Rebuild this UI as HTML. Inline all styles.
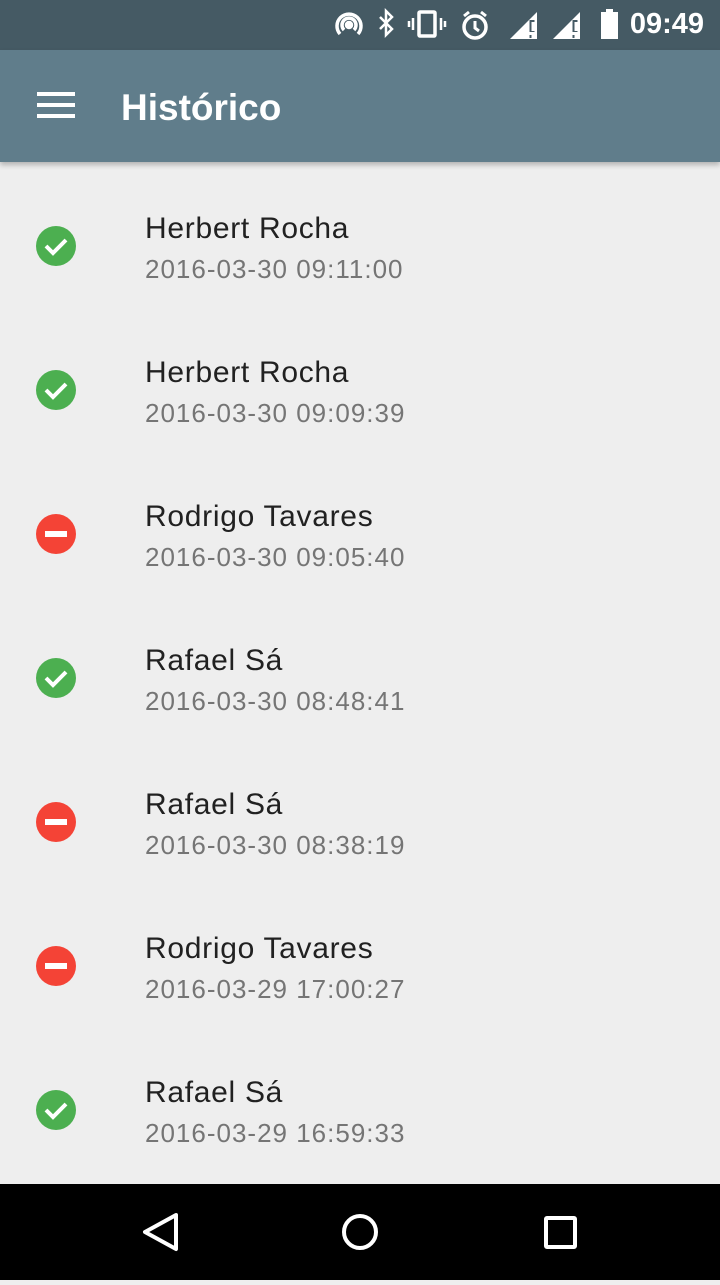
<!DOCTYPE html>
<html><head><meta charset="utf-8"><style>
*{margin:0;padding:0;box-sizing:border-box}
body{width:720px;height:1280px;background:#eeeeee;font-family:"Liberation Sans",Roboto,sans-serif;position:relative;overflow:hidden}
.sb{position:absolute;top:0;left:0;width:720px;height:50px;background:#455a64;color:#fff}
.sb .t{position:absolute;right:16px;top:8px;font-size:29px;font-weight:bold}
.ab{position:absolute;top:50px;left:0;width:720px;height:112px;background:#607d8b;box-shadow:0 3px 5px rgba(0,0,0,.25)}
.ab .title{position:absolute;left:121px;top:37px;color:#fff;font-size:37px;font-weight:bold}
.row{position:absolute;left:0;width:720px;height:144px}
.row svg{position:absolute;left:36px;top:52px}
.name{position:absolute;left:145px;top:38px;font-size:30px;letter-spacing:0.7px;color:#212121}
.date{position:absolute;left:145px;top:80px;font-size:26px;letter-spacing:1px;color:#757575}
.nav{position:absolute;top:1184px;left:0;width:720px;height:96px;background:#000}
</style></head><body>
<div class="sb">
<svg width="300" height="50" style="position:absolute;left:320px;top:0" fill="none" stroke="#fff" stroke-width="3.5">
<path d="M20 34a12 12 0 1 1 18 0M24 30a7 7 0 1 1 10 0"/><circle cx="29" cy="25" r="2.5" fill="#fff"/>
<path d="M60 17l12 12-6 6V11l6 6-12 12" stroke-width="2.5"/>
<rect x="99" y="12" width="16" height="24" rx="1"/><path d="M93 18v12M121 18v12M89 21v6M125 21v6" stroke-width="2.5"/>
<circle cx="155" cy="27" r="11"/><path d="M155 21v7l4 3M144 16l5-4M166 16l-5-4" stroke-width="3"/>
<path d="M190 39L217 12v27z" fill="#fff" stroke="none"/><path d="M212 20v12M212 35v3" stroke="#455a64" stroke-width="5"/><path d="M213 22v9M213 35v3" stroke-width="3"/>
<path d="M233 39L260 12v27z" fill="#fff" stroke="none"/><path d="M255 20v12M255 35v3" stroke="#455a64" stroke-width="5"/><path d="M256 22v9M256 35v3" stroke-width="3"/>
<rect x="281" y="12" width="17" height="27" fill="#fff" stroke="none"/><rect x="286" y="9" width="7" height="4" fill="#fff" stroke="none"/>
</svg>
<div class="t">09:49</div>
</div>
<div class="ab">
<svg width="40" height="30" style="position:absolute;left:37px;top:41px"><rect y="1" width="38" height="4" fill="#fff"/><rect y="12" width="38" height="4" fill="#fff"/><rect y="23" width="38" height="4" fill="#fff"/></svg>
<div class="title">Histórico</div>
</div>

<div class="row" style="top:174px"><svg width="40" height="40"><circle cx="20" cy="20" r="20" fill="#4caf50"/><path d="M10 20l7 7 13-13" stroke="#fff" stroke-width="4" fill="none"/></svg><div class="name">Herbert Rocha</div><div class="date">2016-03-30 09:11:00</div></div>
<div class="row" style="top:318px"><svg width="40" height="40"><circle cx="20" cy="20" r="20" fill="#4caf50"/><path d="M10 20l7 7 13-13" stroke="#fff" stroke-width="4" fill="none"/></svg><div class="name">Herbert Rocha</div><div class="date">2016-03-30 09:09:39</div></div>
<div class="row" style="top:462px"><svg width="40" height="40"><circle cx="20" cy="20" r="20" fill="#f44336"/><rect x="9" y="17" width="22" height="6" fill="#fff"/></svg><div class="name">Rodrigo Tavares</div><div class="date">2016-03-30 09:05:40</div></div>
<div class="row" style="top:606px"><svg width="40" height="40"><circle cx="20" cy="20" r="20" fill="#4caf50"/><path d="M10 20l7 7 13-13" stroke="#fff" stroke-width="4" fill="none"/></svg><div class="name">Rafael Sá</div><div class="date">2016-03-30 08:48:41</div></div>
<div class="row" style="top:750px"><svg width="40" height="40"><circle cx="20" cy="20" r="20" fill="#f44336"/><rect x="9" y="17" width="22" height="6" fill="#fff"/></svg><div class="name">Rafael Sá</div><div class="date">2016-03-30 08:38:19</div></div>
<div class="row" style="top:894px"><svg width="40" height="40"><circle cx="20" cy="20" r="20" fill="#f44336"/><rect x="9" y="17" width="22" height="6" fill="#fff"/></svg><div class="name">Rodrigo Tavares</div><div class="date">2016-03-29 17:00:27</div></div>
<div class="row" style="top:1038px"><svg width="40" height="40"><circle cx="20" cy="20" r="20" fill="#4caf50"/><path d="M10 20l7 7 13-13" stroke="#fff" stroke-width="4" fill="none"/></svg><div class="name">Rafael Sá</div><div class="date">2016-03-29 16:59:33</div></div>

<div class="nav">
<svg width="720" height="96" fill="none" stroke="#fff" stroke-width="4">
<path d="M176 31L145 48l31 17z" stroke-linejoin="round"/>
<circle cx="360" cy="48" r="16"/>
<rect x="546" y="34" width="29" height="29" rx="1"/>
</svg>
</div>
</body></html>
